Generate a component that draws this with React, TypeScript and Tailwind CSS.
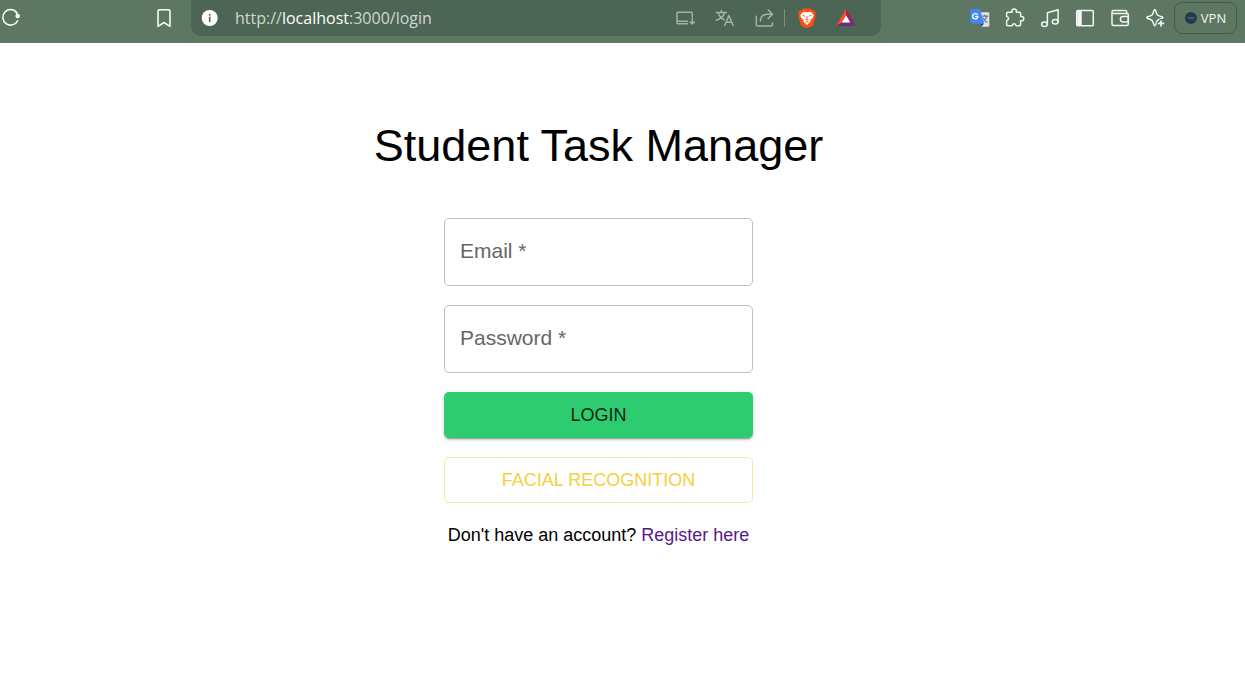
import { useState } from 'react';
import type { ReactNode } from 'react';

type IconButtonProps = { label: string; className?: string; children: ReactNode };

function IconButton({ label, className = '', children }: IconButtonProps) {
  return (
    <button type="button" aria-label={label} className={`size-5 shrink-0 ${className}`}>
      <svg
        viewBox="0 0 20 20"
        className="size-5"
        fill="none"
        stroke="currentColor"
        strokeWidth="1.5"
        strokeLinecap="round"
        strokeLinejoin="round"
        aria-hidden="true"
      >
        {children}
      </svg>
    </button>
  );
}

function UrlField() {
  const [url, setUrl] = useState('http://localhost:3000/login');
  const [, scheme, host, rest] = url.match(/^(\w+:\/\/)?([^:/]*)(.*)$/) ?? ['', '', url, ''];

  return (
    <div className="relative ml-[15px] min-w-0 flex-1 font-['Open_Sans',sans-serif] text-[16px] leading-6">
      <input
        type="text"
        aria-label="Address"
        value={url}
        onChange={(event) => setUrl(event.target.value)}
        className="block w-full bg-transparent text-transparent caret-white outline-none"
      />
      <p
        aria-hidden="true"
        className="pointer-events-none absolute inset-0 truncate text-[#d0d8d2]"
      >
        {scheme}
        <span className="text-white">{host}</span>
        {rest}
      </p>
    </div>
  );
}

function AddressBar() {
  return (
    <div className="flex h-9 min-w-0 flex-1 items-center rounded-b-[10px] bg-[#4d6555] pr-[25px] pl-[9px]">
      <IconButton label="Site information" className="text-white">
        <circle cx="9.7" cy="10" r="8" fill="currentColor" stroke="none" />
        <circle cx="9.7" cy="6.8" r="1" fill="#4d6555" stroke="none" />
        <path d="M9.7 9.4v4" stroke="#4d6555" strokeWidth="1.6" />
      </IconButton>
      <UrlField />
      <div className="flex items-center gap-5 text-[#a5b1a9]">
        <IconButton label="Install app">
          <path d="M17.3 9V5.2a1 1 0 0 0-1-1H3a1 1 0 0 0-1 1v9.600a1 1 0 0 0 1 1h9.500M2 13.300h10.500" />
          <path d="M17.300 10.500v5.300M15.200 14l2.100 2 2.100-2" />
        </IconButton>
        <IconButton label="Translate page">
          <path d="M1.200 4.500h10.300M6.300 2.500v2M3.200 4.700c.8 3.500 3 5.600 6 7M9.500 4.700C8.600 8.200 5.600 10.700 1.300 12.200M9.700 17.500l4.200-10 4.300 10M11.200 14.300h5.500" />
        </IconButton>
        <IconButton label="Share">
          <path d="M1.300 8.300v8.200a1.600 1.600 0 0 0 1.600 1.600h13a1.600 1.600 0 0 0 1.600-1.600v-1.700M5.300 13c.3-4.500 3-6.800 7-6.800h5M13.300 2l4.200 4.200-4.200 4.200" />
        </IconButton>
      </div>
      <div className="mr-3 ml-[9px] h-[18px] w-px bg-[#7d8f83]" />
      <div className="flex items-center gap-[19px]">
        <IconButton label="Brave Shields">
          <path d="M6.200.6h7.600l1.900 2 1.600-.2 1.500 2.300-.6 2 .5 1.600-2.500 8.200c-.3.900-.9 1.500-1.600 2L10 20l-4.600-1.500c-.8-.5-1.300-1.100-1.600-2L1.300 8.300l.5-1.600-.6-2 1.500-2.300 1.600.2z" fill="#fb4f14" stroke="none" />
          <path d="M6.200 3.700 10 4.300l3.800-.6 2.900 3.200-.8 2.900-2.600 2.500.2 1.500L10 17l-3.500-3.200.2-1.500-2.600-2.500-.8-2.900z" fill="#fff" stroke="none" />
          <path d="m6 7.500 2 .6M14 7.500l-2 .6M10 8.500v2.900M8.700 11.500l1.300.6 1.300-.6M8.600 14.200l1.400-.8 1.400.8" stroke="#fb4f14" strokeWidth="0.900" />
        </IconButton>
        <IconButton label="Brave Rewards">
          <path d="M10 .5 0 18l6-3.400 4-7.300z" fill="#ff4724" stroke="none" />
          <path d="M10 .5 20 18l-6-3.400-4-7.300z" fill="#9e1f63" stroke="none" />
          <path d="M0 18h20l-6-3.400H6z" fill="#662d91" stroke="none" />
          <path d="m10 7.300 4.200 7.300H5.800z" fill="#fff" stroke="none" />
        </IconButton>
      </div>
    </div>
  );
}

function Toolbar() {
  return (
    <div className="flex shrink-0 items-center pr-2 pl-[89px] text-[#f2f5f3]">
      <div className="flex items-center gap-[15px]">
        <IconButton label="Google Translate">
          <path d="M8.500 4.300h9.800a1 1 0 0 1 1 1v12.400a1 1 0 0 1-1 1h-7z" fill="#dfe1e3" stroke="none" />
          <path d="M11.700 8.200h6M14.700 7v1.200M12.500 14c2.300-1.200 3.700-3.200 4-5.500M13 10c.7 1.800 2 3.200 4 4.300" stroke="#607d8b" strokeWidth="1.200" />
          <path d="M1.200 1h8.800l4 14.500H1.200a1 1 0 0 1-1-1V2a1 1 0 0 1 1-1z" fill="#4486f4" stroke="none" />
          <path d="M10.200 15.500H14l-2.500 3.200z" fill="#3037ad" stroke="none" />
          <path d="M7.200 6.300A2.700 2.700 0 1 0 8 8.500H5.700" stroke="#fff" strokeWidth="1.300" />
        </IconButton>
        <IconButton label="Extensions">
          <path d="M2.800 4.200h4c.3 0 .4-.3.300-.6-.5-1.500.6-2.700 2.100-2.700s2.600 1.200 2.100 2.700c-.1.300 0 .6.300.6h2.800c.7 0 1.200.5 1.200 1.200v2.700c0 .3.300.5.600.4 1.500-.4 2.600.7 2.600 2.100s-1.100 2.500-2.600 2.100c-.3-.1-.6.100-.6.400v3.400c0 .7-.5 1.200-1.200 1.200h-3c-.3 0-.5-.2-.6-.5-.3-1-.8-1.500-1.700-1.500s-1.400.5-1.700 1.500c-.1.300-.3.500-.6.500h-4c-.7 0-1.200-.5-1.200-1.200v-3.600c0-.3.200-.5.500-.6 1-.3 1.500-.9 1.500-1.800s-.5-1.400-1.500-1.700c-.3-.1-.5-.3-.5-.6v-2.800c0-.7.500-1.200 1.200-1.200z" />
        </IconButton>
        <IconButton label="Media controls">
          <ellipse cx="4.500" cy="16.300" rx="2.900" ry="2.300" />
          <ellipse cx="15.200" cy="13.800" rx="2.900" ry="2.300" />
          <path d="M7.400 16.300V4.700l10.700-2.900v12" />
        </IconButton>
        <IconButton label="Sidebar">
          <rect x="1.700" y="2.500" width="16.600" height="15.300" rx="1" />
          <path d="M2.500 3h3.700v14.300H2.500z" fill="currentColor" stroke="currentColor" strokeWidth="1" />
        </IconButton>
        <IconButton label="Wallet">
          <path d="M2 3.800c0-.8.600-1.300 1.400-1.300h12c.8 0 1.300.5 1.300 1.300v1.600M2 3.800c0 .9.600 1.600 1.500 1.600H17c.8 0 1.300.5 1.300 1.300v9.300c0 .9-.6 1.500-1.500 1.500H3.500c-.9 0-1.500-.6-1.500-1.500z" />
          <path d="M18.300 8.500h-5.200a2.700 2.700 0 0 0 0 5.400h5.200z" />
        </IconButton>
        <IconButton label="Assistant">
          <path d="M9 2.300c.5-.9 1.100-.9 1.500 0l1.300 3.600c.3.900.8 1.400 1.700 1.700l3.600 1.300c.9.400.9 1 0 1.400l-3.600 1.400c-.9.300-1.400.8-1.700 1.700l-1.300 3.600c-.4.900-1 .9-1.500 0l-1.300-3.600c-.3-.9-.8-1.400-1.700-1.700l-3.600-1.400c-.9-.4-.9-1 0-1.400L6 7.600c.9-.3 1.400-.8 1.700-1.700z" />
          <path d="M16 12.800v5.100M13.600 15.400h5.100" stroke="#5d7763" strokeWidth="4" />
          <path d="M16 13v4.800M13.600 15.400h4.800" strokeWidth="1.700" />
        </IconButton>
      </div>
      <button
        type="button"
        className="ml-[9px] flex h-8 w-[63px] items-center justify-center gap-1 rounded-lg border border-[#455b4c] font-['Open_Sans',sans-serif] text-[13px] leading-5"
      >
        <svg viewBox="0 0 12 12" className="size-3" aria-hidden="true">
          <circle cx="6" cy="6" r="6" fill="#233b4f" />
          <path d="M3 6h6" stroke="#66806f" strokeWidth="1" />
        </svg>
        VPN
      </button>
    </div>
  );
}

type FieldProps = { id: string; type: string; label: string };

function Field({ id, type, label }: FieldProps) {
  return (
    <div className="relative">
      <input
        id={id}
        type={type}
        required
        placeholder=" "
        className="peer block h-[68px] w-full rounded-[5px] border border-[#c0c0c0] px-4 text-[21px] text-black/85 outline-none focus:border-[#2ecc71]"
      />
      <label
        htmlFor={id}
        className="pointer-events-none absolute inset-y-0 left-4 flex items-center pb-[2px] text-[21px] leading-8 whitespace-pre text-[#666666] peer-[:not(:placeholder-shown)]:hidden"
      >
        {label} *
      </label>
    </div>
  );
}

export default function App() {
  return (
    <div className="min-h-screen bg-white font-['Liberation_Sans',Arial,sans-serif] text-black">
      <header className="flex h-[43px] items-start bg-[#5d7763]">
        <div className="flex h-9 w-[191px] shrink-0 items-center justify-between pr-[17px] pl-px text-white">
          <IconButton label="Reload">
            <path d="M16.600 12.800A7.800 7.800 0 1 1 16 4.800" />
            <circle cx="16.700" cy="8" r="2.300" fill="currentColor" stroke="none" />
            <path d="M15.200 4.400l1.300 3" />
          </IconButton>
          <IconButton label="Bookmark">
            <path d="M5.300 1.800h9.400a1.300 1.300 0 0 1 1.300 1.300v15.200L10 14.500l-6 3.800V3.100a1.300 1.300 0 0 1 1.300-1.300z" />
          </IconButton>
        </div>
        <AddressBar />
        <div className="flex h-9 items-center">
          <Toolbar />
        </div>
      </header>

      <main className="flex flex-col items-center pt-[76px] pr-12">
        <h1 className="text-[45px] leading-[54px]">Student Task Manager</h1>
        <form
          className="mt-[45px] flex w-full max-w-[309px] flex-col gap-[19px]"
          onSubmit={(event) => event.preventDefault()}
        >
          <Field id="email" type="email" label="Email" />
          <Field id="password" type="password" label="Password" />
          <button
            type="submit"
            className="h-[46px] rounded-[5px] bg-[#2ecc71] text-[18px] leading-8 text-black/85 uppercase shadow-[0_3px_1px_-2px_rgba(0,0,0,0.2),0_2px_2px_0_rgba(0,0,0,0.14),0_1px_5px_0_rgba(0,0,0,0.12)]"
          >
            Login
          </button>
          <button
            type="button"
            className="h-[46px] rounded-[5px] border border-[#f9e79f] text-[18px] leading-8 text-[#f4d03f] uppercase"
          >
            Facial Recognition
          </button>
          <p className="text-center text-[18px] leading-[26px] whitespace-nowrap">
            Don't have an account?{' '}
            <a href="/register" className="text-[#551a8b]">
              Register here
            </a>
          </p>
        </form>
      </main>
    </div>
  );
}
